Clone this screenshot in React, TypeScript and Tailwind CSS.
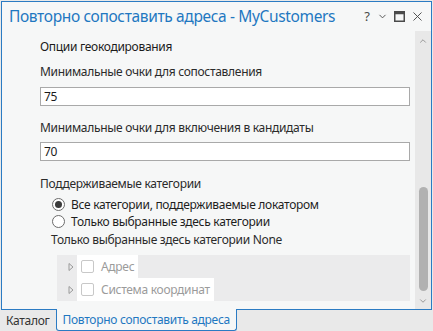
import { ChevronDown, ChevronUp, X } from 'lucide-react';

const font = { fontFamily: '"Noto Sans", "Open Sans", Arial, sans-serif' };

function Radio({ checked, label }: { checked: boolean; label: string }) {
  return (
    <div className="flex items-center h-[17px]">
      <span className="w-[13px] h-[13px] rounded-full border border-[#6b6b6b] bg-white flex items-center justify-center">
        {checked && <span className="w-[7px] h-[7px] rounded-full bg-[#3b3b3b]" />}
      </span>
      <span className="ml-[6px] text-[12px] tracking-[-0.3px] text-[#1e1e1e]">{label}</span>
    </div>
  );
}

function TreeRow({ label }: { label: string }) {
  return (
    <div className="flex items-center h-[23px]">
      <svg className="w-[12px] h-[10px] ml-[8px]" viewBox="0 0 12 10">
        <path d="M4 1.5 L8 5 L4 8.5 Z" fill="none" stroke="#9a9a9a" strokeWidth="1" />
      </svg>
      <div className="flex items-center h-[23px] bg-white pl-[4px] pr-[4px]">
        <span className="w-[13px] h-[13px] rounded-[2px] border border-[#c8c8c8] bg-white" />
        <span className="ml-[7px] text-[12px] tracking-[-0.3px] text-[#9b9b9b]">{label}</span>
      </div>
    </div>
  );
}

export default function App() {
  return (
    <div className="w-[433px] h-[331px] bg-[#e9e9e9] overflow-hidden" style={font}>
      {/* Pane */}
      <div className="ml-[1px] mt-[1px] w-[431px] h-[309px] border border-[#2b7bc3] bg-[#f6f7f7] flex flex-col">
        {/* Title bar */}
        <div className="h-[29px] flex items-center pl-[7px] pr-[6px] shrink-0">
          <span className="text-[15.5px] tracking-[-0.35px] text-[#1f78c1] whitespace-nowrap leading-none">
            Повторно сопоставить адреса - MyCustomers
          </span>
          <div className="ml-auto flex items-center text-[#4a4a4a]">
            <span className="text-[13px] leading-none w-[10px] text-center">?</span>
            <ChevronDown size={11} strokeWidth={2} className="ml-[5px]" />
            <svg width="11" height="11" viewBox="0 0 11 11" className="ml-[6px]">
              <rect x="0.75" y="0.75" width="9.5" height="9.5" fill="none" stroke="#4a4a4a" strokeWidth="1.5" />
              <rect x="0.75" y="0.75" width="9.5" height="2.5" fill="#4a4a4a" />
            </svg>
            <X size={15} strokeWidth={1.5} className="ml-[5px]" />
          </div>
        </div>

        {/* Body */}
        <div className="flex-1 flex min-h-0">
          <div className="flex-1 pl-[38px] pr-[5px] text-[#2b2b2b] text-[12px] tracking-[-0.3px]">
            <div className="text-[#1b1b1b] h-[20px] flex items-center mt-[6px]">Опции геокодирования</div>

            <div className="h-[20px] flex items-center mt-[5px]">Минимальные очки для сопоставления</div>
            <div className="h-[19px] mt-[5px] border border-[#a9a9a9] bg-white flex items-center pl-[3px] text-[#1b1b1b]">75</div>

            <div className="h-[20px] flex items-center mt-[12px]">Минимальные очки для включения в кандидаты</div>
            <div className="h-[19px] mt-[4px] border border-[#a9a9a9] bg-white flex items-center pl-[3px] text-[#1b1b1b]">70</div>

            <div className="h-[20px] flex items-center mt-[13px]">Поддерживаемые категории</div>
            <div className="pl-[12px] mt-[2px]">
              <Radio checked label="Все категории, поддерживаемые локатором" />
              <Radio checked={false} label="Только выбранные здесь категории" />
            </div>
            <div className="pl-[11px] h-[20px] flex items-center">Только выбранные здесь категории None</div>

            <div className="ml-[17px] mt-[5px] bg-[#ebebec] h-[46px]">
              <TreeRow label="Адрес" />
              <TreeRow label="Система координат" />
            </div>
          </div>

          {/* Scrollbar */}
          <div className="w-[16px] bg-[#e8e8e8] flex flex-col items-center">
            <ChevronUp size={10} strokeWidth={2} className="text-[#888] mt-[5px]" />
            <div className="w-[9px] h-[104px] rounded-full bg-[#b1b1b1] mt-[141px]" />
            <ChevronDown size={10} strokeWidth={2} className="text-[#888] mt-[5px]" />
          </div>
        </div>
      </div>

      {/* Tabs */}
      <div className="flex h-[21px] items-stretch">
        <div className="pl-[6px] pr-[6px] flex items-center text-[12px] tracking-[-0.3px] text-[#333]">Каталог</div>
        <div className="px-[6px] flex items-center text-[12px] tracking-[-0.3px] text-[#1f78c1] bg-[#f6f7f7] border border-t-0 border-[#2b7bc3] rounded-b-[3px] mt-[-1px]">
          Повторно сопоставить адреса
        </div>
      </div>
    </div>
  );
}
